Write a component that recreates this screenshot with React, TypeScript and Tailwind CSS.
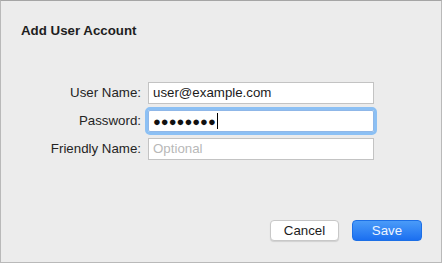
const FONT = "font-['Liberation_Sans',Helvetica,Arial,sans-serif]";

function Field({
  label,
  children,
  focused,
}: {
  label: string;
  children: React.ReactNode;
  focused?: boolean;
}) {
  return (
    <div className="flex items-center h-[22px]">
      <div className="w-[141px] text-right text-[13.3px] text-[#242424] leading-none">{label}</div>
      <div
        className={`ml-[7px] w-[226px] h-[22px] bg-white flex items-center pl-[4px] text-[13.3px] leading-none ${
          focused
            ? "border border-[#8fb7e8] outline-[3px] outline outline-[#8cc0f4] rounded-[2px]"
            : "border border-[#c3c3c3]"
        }`}
      >
        {children}
      </div>
    </div>
  );
}

export default function App() {
  return (
    <div
      className={`${FONT} w-[442px] h-[263px] box-border border border-[#b9b9b9] border-t-[#a5a5a5] bg-[#ececec] flex flex-col`}
    >
      <h1 className="pl-[20px] pt-[22px] text-[13.3px] font-bold text-[#1e1e1e] leading-[16px]">
        Add User Account
      </h1>

      <div className="mt-[43px] flex flex-col gap-[6px] -ml-px">
        <Field label="User Name:">
          <span className="text-[#1a1a1a]">user@example.com</span>
        </Field>
        <Field label="Password:" focused>
          <span className="text-[#111] text-[13px] tracking-[0px]">●●●●●●●●</span>
          <span className="ml-[1px] w-px h-[16px] bg-black" />
        </Field>
        <Field label="Friendly Name:">
          <span className="text-[#b8b8b8]">Optional</span>
        </Field>
      </div>

      <div className="flex-1" />

      <div className="flex justify-end gap-[13px] pr-[19px] pb-[21px]">
        <button className="w-[69px] h-[21px] rounded-[4px] bg-white border border-[#c8c8c8] shadow-[0_1px_1px_rgba(0,0,0,0.12)] text-[13.3px] text-[#1c1c1c] leading-none">
          Cancel
        </button>
        <button className="w-[70px] h-[21px] rounded-[4px] bg-gradient-to-b from-[#4a9bf8] to-[#1b6ff0] border border-[#1c6fe6] text-[13.3px] text-[#eef4ff] leading-none">
          Save
        </button>
      </div>
    </div>
  );
}
